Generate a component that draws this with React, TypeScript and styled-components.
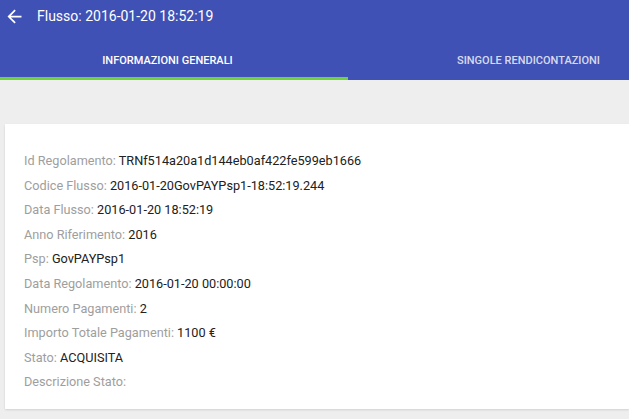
import styled, { createGlobalStyle } from "styled-components";

const GlobalStyle = createGlobalStyle`
  html, body {
    margin: 0;
    padding: 0;
    background: #eeeeee;
    font-family: Roboto, "Liberation Sans", sans-serif;
  }
`;

const Page = styled.div`
  width: 629px;
  height: 419px;
  overflow: hidden;
  background: #eeeeee;
`;

const Header = styled.header`
  background: #3f51b5;
  color: #fff;
`;

const TitleBar = styled.div`
  height: 32px;
  display: flex;
  align-items: center;
  padding-left: 4px;
  gap: 12px;
`;

const BackButton = styled.button`
  width: 21px;
  height: 21px;
  padding: 0;
  border: 0;
  background: none;
  color: #fff;
  display: flex;
`;

const Title = styled.h1`
  margin: 0;
  font-size: 14px;
  font-weight: 400;
`;

const Tabs = styled.nav`
  position: relative;
  height: 48px;
  display: flex;
  gap: 26px;
`;

const Tab = styled.div<{ $active?: boolean }>`
  width: 335px;
  flex-shrink: 0;
  display: flex;
  align-items: center;
  justify-content: center;
  padding-top: 9px;
  font-size: 11px;
  font-weight: 500;
  text-transform: uppercase;
  color: ${(p) => (p.$active ? "#ffffff" : "rgba(255,255,255,0.8)")};
`;

const Indicator = styled.div`
  position: absolute;
  left: 0;
  bottom: 0;
  width: 348px;
  height: 3px;
  background: #6fd23c;
`;

const Content = styled.main`
  padding: 44px 0 0 5px;
`;

const Card = styled.section`
  background: #fff;
  padding: 25px 0 14px 19px;
  box-shadow: 0 1px 2px rgba(0, 0, 0, 0.12);
`;

const Row = styled.div`
  font-size: 12.7px;
  line-height: 24.6px;
  color: #212121;
  white-space: nowrap;
`;

const Label = styled.span`
  color: #9e9e9e;
`;

const rows: [string, string][] = [
  ["Id Regolamento", "TRNf514a20a1d144eb0af422fe599eb1666"],
  ["Codice Flusso", "2016-01-20GovPAYPsp1-18:52:19.244"],
  ["Data Flusso", "2016-01-20 18:52:19"],
  ["Anno Riferimento", "2016"],
  ["Psp", "GovPAYPsp1"],
  ["Data Regolamento", "2016-01-20 00:00:00"],
  ["Numero Pagamenti", "2"],
  ["Importo Totale Pagamenti", "1100 €"],
  ["Stato", "ACQUISITA"],
  ["Descrizione Stato", ""],
];

export default function App() {
  return (
    <Page>
      <GlobalStyle />
      <Header>
        <TitleBar>
          <BackButton aria-label="Indietro">
            <svg width="21" height="21" viewBox="0 0 24 24" fill="currentColor">
              <path d="M20 11H7.83l5.59-5.59L12 4l-8 8 8 8 1.41-1.41L7.83 13H20v-2z" />
            </svg>
          </BackButton>
          <Title>Flusso: 2016-01-20 18:52:19</Title>
        </TitleBar>
        <Tabs>
          <Tab $active>Informazioni generali</Tab>
          <Tab>Singole rendicontazioni</Tab>
          <Indicator />
        </Tabs>
      </Header>
      <Content>
        <Card>
          {rows.map(([label, value]) => (
            <Row key={label}>
              <Label>{label}:</Label> {value}
            </Row>
          ))}
        </Card>
      </Content>
    </Page>
  );
}
